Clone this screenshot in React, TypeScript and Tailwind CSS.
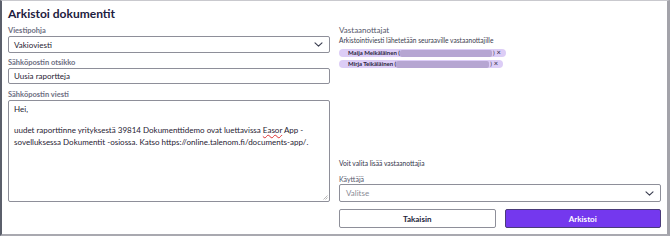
import React from "react";

function Chevron() {
  return (
    <svg width="9" height="5" viewBox="0 0 9 5" fill="none">
      <path d="M1 0.8l3.5 3.4 3.5-3.4" stroke="#3a3d4f" strokeWidth="1.1" strokeLinecap="round" strokeLinejoin="round" />
    </svg>
  );
}

function Chip({ name, blur }: { name: string; blur: number }) {
  return (
    <div className="flex h-[8px] items-center rounded-full bg-[#dccdf6] pl-[9px] pr-[5px] text-[6px] font-bold leading-none text-[#2a2440]">
      <span>{name} (</span>
      <span className="h-[7px] rounded-[2px] bg-[#b6a6d2]" style={{ width: blur }} />
      <span className="ml-[1px] font-normal">)</span>
      <span className="ml-[2px] text-[7.5px] font-normal leading-none">×</span>
    </div>
  );
}

export default function App() {
  return (
    <div
      className="h-[236px] w-[670px] overflow-hidden border-t border-b-2 border-l-2 border-r-[3px] border-t-[#c9c9ce] border-b-[#a9a9b0] border-l-[#5b5f6b] border-r-[#a3a3aa] bg-white text-[#1f2233]"
      style={{ fontFamily: "Lato, 'Open Sans', sans-serif" }}
    >
      <div className="grid h-full grid-cols-2 gap-[9px] px-[6px]">
        <div className="flex flex-col">
          <h1 className="mt-[6px] text-[12px] font-bold leading-[14px] text-[#1d2040]">Arkistoi dokumentit</h1>
          <label className="mt-[5px] text-[7.5px] font-bold leading-[9px] text-[#6e6f82]">Viestipohja</label>
          <div className="mt-[1px] flex h-[17px] items-center justify-between rounded-[2px] border border-[#8e8f99] pl-[5px] pr-[6px] text-[8px]">
            <span>Vakioviesti</span>
            <Chevron />
          </div>
          <label className="mt-[5px] text-[7.5px] font-bold leading-[9px] text-[#6e6f82]">Sähköpostin otsikko</label>
          <div className="mt-[1px] flex h-[16px] items-center rounded-[2px] border border-[#8e8f99] px-[5px] text-[8px]">
            Uusia raportteja
          </div>
          <label className="mt-[6px] text-[7.5px] font-bold leading-[9px] text-[#6e6f82]">Sähköpostin viesti</label>
          <div className="relative mt-[1px] h-[102px] rounded-[2px] border border-[#8e8f99] px-[5px] pt-[2px] text-[8px] leading-[12px]">
            <p>Hei,</p>
            <p className="mt-[9px]">
              uudet raporttinne yrityksestä 39814 Dokumenttidemo ovat luettavissa{" "}
              <span className="underline decoration-wavy decoration-[#d33] decoration-[0.5px]">Easor</span> App -
              sovelluksessa Dokumentit -osiossa. Katso https://online.talenom.fi/documents-app/.
            </p>
            <svg className="absolute bottom-[1px] right-[1px]" width="5" height="5" viewBox="0 0 5 5">
              <path d="M4.5 0.5L0.5 4.5M4.5 2.5L2.5 4.5" stroke="#999" strokeWidth="0.7" />
            </svg>
          </div>
        </div>
        <div className="flex flex-col">
          <div className="mt-[24px] text-[8px] leading-[10px] text-[#55576a]">Vastaanottajat</div>
          <div className="mt-[1px] text-[6.6px] leading-[8px] text-[#3a3c4e]">Arkistointiviesti lähetetään seuraaville vastaanottajille</div>
          <div className="mt-[5px] flex flex-col items-start gap-[3px]">
            <Chip name="Maija Meikäläinen" blur={92} />
            <Chip name="Mirja Teikäläinen" blur={93} />
          </div>
          <div className="mt-auto text-[6.7px] leading-[8px] text-[#33354a]">Voit valita lisää vastaanottajia</div>
          <label className="mt-[8px] text-[7px] leading-[8px] text-[#55576a]">Käyttäjä</label>
          <div className="mt-[1px] flex h-[18px] items-center justify-between rounded-[2px] border border-[#8e8f99] pl-[6px] pr-[6px] text-[8px] text-[#8a8b96]">
            <span>Valitse</span>
            <Chevron />
          </div>
          <div className="mb-[6px] mt-[7px] grid grid-cols-2 gap-[9px]">
            <button className="h-[19px] rounded-[2px] border border-[#8e8f99] bg-white text-[8px] font-bold text-[#22253a]">
              Takaisin
            </button>
            <button className="h-[19px] rounded-[2px] border border-[#4a3b7a] bg-[#7438ee] text-[8px] font-bold text-white">
              Arkistoi
            </button>
          </div>
        </div>
      </div>
    </div>
  );
}
